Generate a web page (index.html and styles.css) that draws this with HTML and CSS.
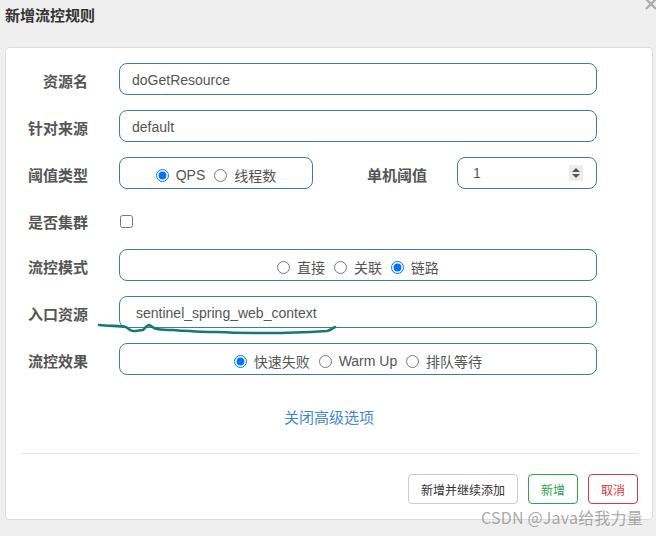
FILE: index.html
```html
<!DOCTYPE html>
<html lang="zh-CN">
<head>
<meta charset="utf-8">
<title>新增流控规则</title>
<link rel="stylesheet" href="styles.css">
</head>
<body>
<div class="dialog">
  <div class="dialog-head">
    <h1 class="dialog-title">新增流控规则</h1>
    <svg class="close-x" width="12" height="12" viewBox="0 0 12 12"><path d="M1 0 L11 10 M11 0 L1 10" stroke="#a8a8a8" stroke-width="2.2" fill="none"/></svg>
  </div>
  <div class="panel">
    <div class="form">
      <div class="row">
        <label class="lbl">资源名</label>
        <div class="field">doGetResource</div>
      </div>
      <div class="row">
        <label class="lbl">针对来源</label>
        <div class="field">default</div>
      </div>
      <div class="row">
        <label class="lbl">阈值类型</label>
        <div class="split">
          <div class="box box-small">
            <label class="opt"><input type="radio" name="t" checked> QPS</label>
            <label class="opt"><input type="radio" name="t"> 线程数</label>
          </div>
          <label class="lbl lbl-mid">单机阈值</label>
          <div class="field num"><span>1</span><span class="spin"><svg width="10" height="12" viewBox="0 0 10 12"><path d="M1 5 L5 1 L9 5 Z M1 7 L5 11 L9 7 Z" fill="#555"/></svg></span></div>
        </div>
      </div>
      <div class="row row-check">
        <label class="lbl">是否集群</label>
        <div class="check-wrap"><input type="checkbox" class="check"></div>
      </div>
      <div class="row">
        <label class="lbl">流控模式</label>
        <div class="box">
          <label class="opt"><input type="radio" name="m"> 直接</label>
          <label class="opt"><input type="radio" name="m"> 关联</label>
          <label class="opt"><input type="radio" name="m" checked> 链路</label>
        </div>
      </div>
      <div class="row">
        <label class="lbl">入口资源</label>
        <div class="field field-wide">sentinel_spring_web_context</div>
      </div>
      <div class="row">
        <label class="lbl">流控效果</label>
        <div class="box">
          <label class="opt"><input type="radio" name="e" checked> 快速失败</label>
          <label class="opt"><input type="radio" name="e"> Warm Up</label>
          <label class="opt"><input type="radio" name="e"> 排队等待</label>
        </div>
      </div>
    </div>
    <div class="adv"><a class="adv-link">关闭高级选项</a></div>
    <div class="footer">
      <button class="btn">新增并继续添加</button>
      <button class="btn btn-ok">新增</button>
      <button class="btn btn-cancel">取消</button>
    </div>
  </div>
  <svg class="scribble" width="656" height="536" viewBox="0 0 656 536"><path d="M99 325 C110 326 120 326 126 327 C129 329 130 331 133 331 C137 331 140 330 143 330 C145 328 147 325 149 325 C152 326 154 329 157 329 C163 330 168 330 173 330 C180 331 185 331 190 331 C200 332 210 332 217 332 C235 333 250 333 267 333 C290 333 310 332 327 331 C331 330 333 328 335 327" stroke="#127a72" stroke-width="2.6" fill="none" stroke-linecap="round" stroke-linejoin="round"/></svg>
  <div class="watermark">CSDN @Java给我力量</div>
</div>
</body>
</html>
```

FILE: styles.css
```css
* { box-sizing: border-box; }
html, body {
  margin: 0;
  padding: 0;
  background: #efefef;
  font-family: "Liberation Sans", "Noto Sans CJK SC", sans-serif;
  color: #555;
}
.dialog {
  position: relative;
  width: 656px;
  height: 536px;
  overflow: hidden;
}
.dialog-head {
  height: 47px;
  display: flex;
  align-items: flex-start;
  justify-content: space-between;
}
.dialog-title {
  margin: 5px 0 0 5px;
  font-size: 15px;
  line-height: 20px;
  font-weight: 700;
  color: #333;
  font-family: "Noto Sans CJK SC", sans-serif;
}
.close-x {
  margin: -1px -1px 0 0;
}
.panel {
  margin: 0 3px 0 5px;
  height: 473px;
  background: #fff;
  border: 1px solid #dcdcdc;
  border-radius: 4px;
  padding-top: 15px;
}
.form {
  display: flex;
  flex-direction: column;
  gap: 15px;
}
.row {
  display: flex;
  align-items: center;
  height: 32px;
}
.row-check {
  margin-bottom: -2px;
}
.lbl {
  width: 82px;
  flex: none;
  text-align: right;
  font-family: "Noto Sans CJK SC", sans-serif;
  font-size: 15px;
  font-weight: 700;
  color: #555;
  margin-right: 31px;
  padding-top: 3px;
}
.field {
  width: 478px;
  height: 32px;
  border: 1px solid #3a78b6;
  border-radius: 8px;
  padding: 1px 12px 0;
  display: flex;
  align-items: center;
  font-size: 14px;
  color: #555;
}
.field-wide { padding-left: 16px; }
.split {
  display: flex;
  align-items: center;
}
.box {
  width: 478px;
  height: 32px;
  border: 1px solid #3a78b6;
  border-radius: 8px;
  padding-top: 4px;
  display: flex;
  align-items: center;
  justify-content: center;
  gap: 9px;
  font-size: 14px;
  color: #555;
  font-family: "Liberation Sans", "Noto Sans CJK SC", sans-serif;
}
.box-small { width: 194px; }
.lbl-mid {
  width: 114px;
  margin-right: 30px;
}
.num {
  width: 140px;
  padding: 0 13px 0 15px;
  justify-content: space-between;
}
.spin {
  width: 14px;
  height: 16px;
  background: #ececec;
  display: flex;
  align-items: center;
  justify-content: center;
}
.opt {
  display: flex;
  align-items: center;
  gap: 3px;
  white-space: pre;
}
.opt input {
  margin: 0;
  width: 13px;
  height: 13px;
}
.check-wrap { display: flex; align-items: center; }
.check {
  margin: 3px 0 0 1px;
  width: 13px;
  height: 13px;
}
.adv {
  margin-top: 32px;
  height: 20px;
  text-align: center;
}
.adv-link {
  font-size: 15px;
  line-height: 20px;
  color: #4189c9;
  font-family: "Noto Sans CJK SC", sans-serif;
  cursor: pointer;
}
.footer {
  margin: 26px 14px 0 15px;
  border-top: 1px solid #e5e5e5;
  padding-top: 20px;
  display: flex;
  justify-content: flex-end;
  gap: 10px;
}
.btn {
  height: 30px;
  padding: 0 12px;
  background: #fff;
  border: 1px solid #cccccc;
  border-radius: 4px;
  font-family: "Noto Sans CJK SC", sans-serif;
  font-size: 12px;
  color: #333;
}
.btn-ok {
  width: 50px;
  border-color: #2ea44f;
  color: #2ea44f;
}
.btn-cancel {
  width: 50px;
  border-color: #dc3545;
  color: #dc3545;
}
.scribble {
  position: absolute;
  left: 0;
  top: 0;
  pointer-events: none;
}
.watermark {
  position: absolute;
  left: 481px;
  top: 506px;
  font-family: "Noto Sans CJK SC", sans-serif;
  font-size: 16px;
  line-height: 22px;
  color: rgba(140, 140, 140, 0.75);
  letter-spacing: 0.2px;
  white-space: nowrap;
}
```
